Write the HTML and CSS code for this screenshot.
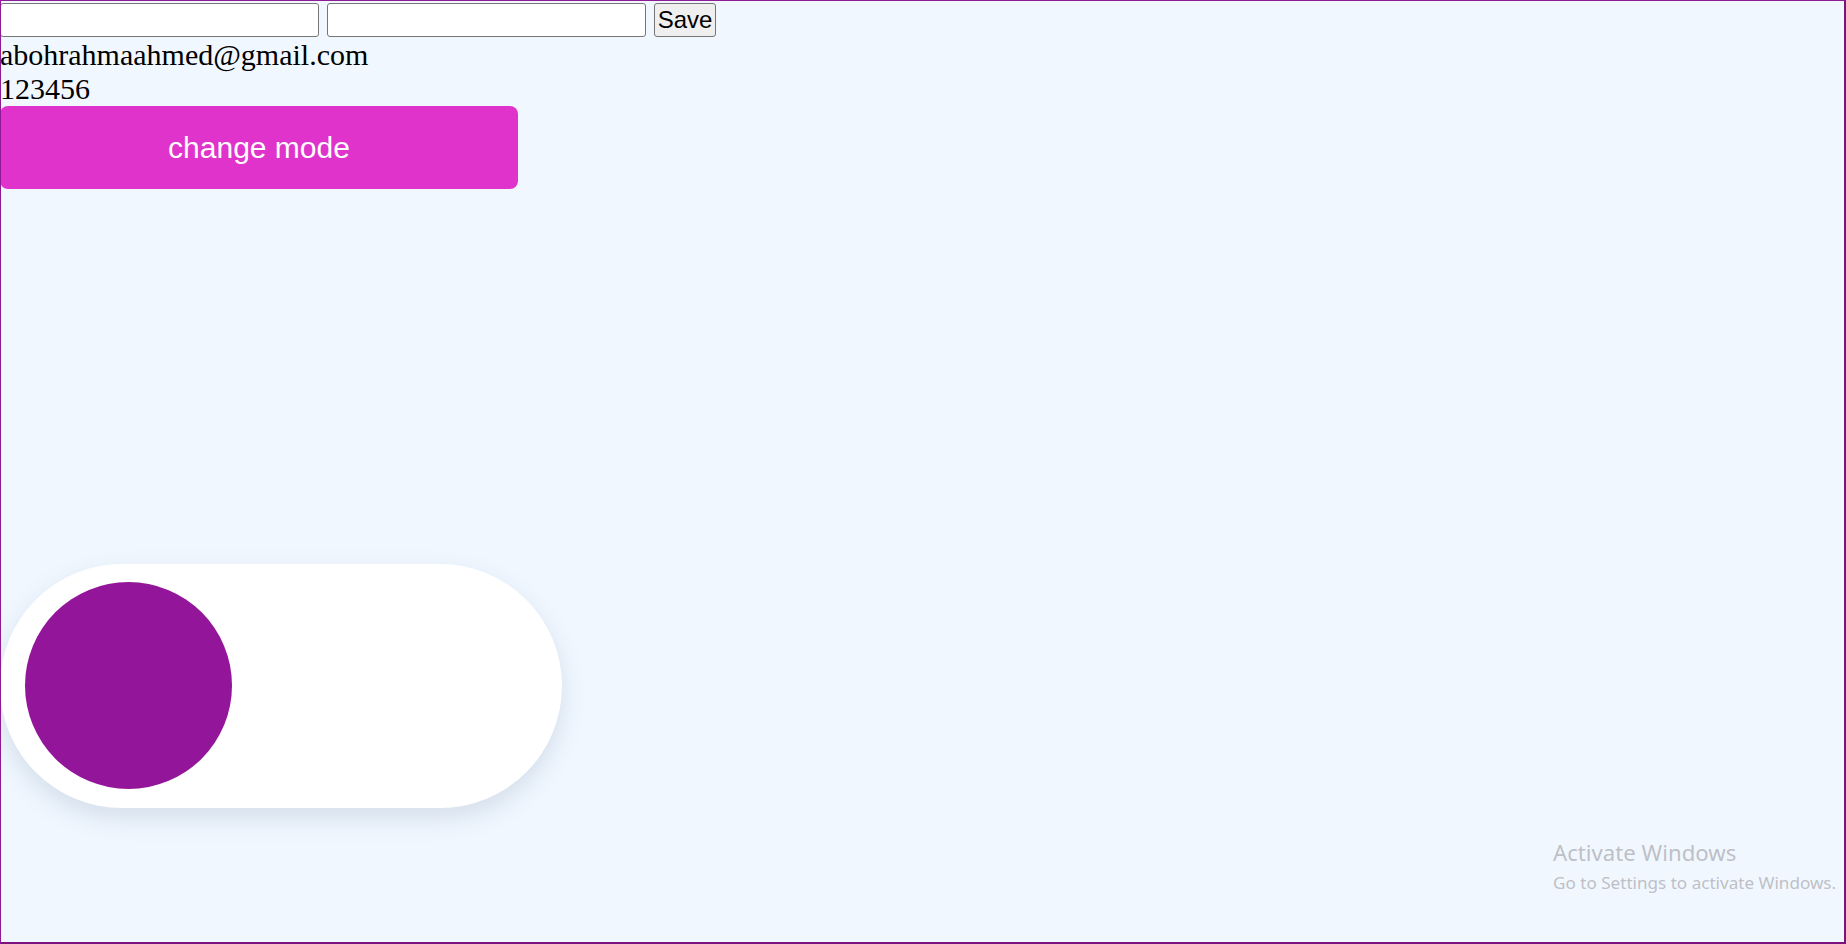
FILE: index.html
```html
<!DOCTYPE html>
<html>
<head>
<meta charset="utf-8">
<title>Mode</title>
<link rel="stylesheet" href="styles.css">
</head>
<body>
<div class="page">
  <form class="form-row">
    <input class="field" type="text">
    <input class="field" type="text">
    <button class="save" type="button">Save</button>
  </form>
  <div class="info">abohrahmaahmed@gmail.com</div>
  <div class="info">123456</div>
  <button class="mode-btn" type="button">change mode</button>
  <div class="toggle">
    <div class="knob"></div>
  </div>
</div>
<div class="watermark">
  <div class="wm-title">Activate Windows</div>
  <div class="wm-sub">Go to Settings to activate Windows.</div>
</div>
<div class="frame"></div>
</body>
</html>
```

FILE: styles.css
```css
html, body {
  margin: 0;
  padding: 0;
  height: 100%;
}
body {
  background: #f0f7ff;
  font-family: "Liberation Serif", "Times New Roman", serif;
  font-size: 30px;
  color: #000;
  overflow: hidden;
}
.page {
  display: flex;
  flex-direction: column;
  align-items: flex-start;
  padding-top: 3px;
}
.form-row {
  display: flex;
  gap: 8px;
  margin: 0;
}
.field {
  box-sizing: border-box;
  width: 319px;
  height: 34px;
  margin: 0;
  border: 1px solid #767676;
  border-radius: 3px;
  background: #fff;
  font-size: 24px;
}
.save {
  box-sizing: border-box;
  width: 62px;
  height: 34px;
  margin: 0;
  padding: 0;
  border: 1px solid #767676;
  border-radius: 3px;
  background: #efefef;
  font-family: "Liberation Sans", Arial, sans-serif;
  font-size: 24px;
  color: #000;
}
.info {
  line-height: 34.5px;
}
.info:first-of-type {
  padding-top: 1px;
  line-height: 33.5px;
}
.mode-btn {
  box-sizing: border-box;
  width: 518px;
  height: 83px;
  margin: 0;
  border: none;
  border-radius: 8px;
  background: #df33cc;
  color: #fff;
  font-family: "Liberation Sans", Arial, sans-serif;
  font-size: 30px;
}
.toggle {
  box-sizing: border-box;
  width: 562px;
  height: 244px;
  margin-top: 375px;
  padding: 18px 25px;
  border-radius: 122px;
  background: #fff;
  box-shadow: 0 10px 25px rgba(90, 110, 140, 0.18);
}
.knob {
  width: 207px;
  height: 207px;
  border-radius: 50%;
  background: #93169a;
}
.watermark {
  position: absolute;
  left: 1553px;
  top: 838px;
  color: rgba(160, 160, 165, 0.65);
  font-family: "Noto Sans", "Open Sans", sans-serif;
}
.wm-title {
  font-size: 22.2px;
  line-height: 30px;
}
.wm-sub {
  margin-top: 4px;
  font-size: 17.1px;
  line-height: 22px;
}
.frame {
  position: absolute;
  inset: 0;
  border-top: 1px solid #8e1a94;
  border-left: 1px solid #8e1a94;
  border-right: 2px solid #7a1380;
  border-bottom: 2px solid #7a1380;
  pointer-events: none;
}
```
